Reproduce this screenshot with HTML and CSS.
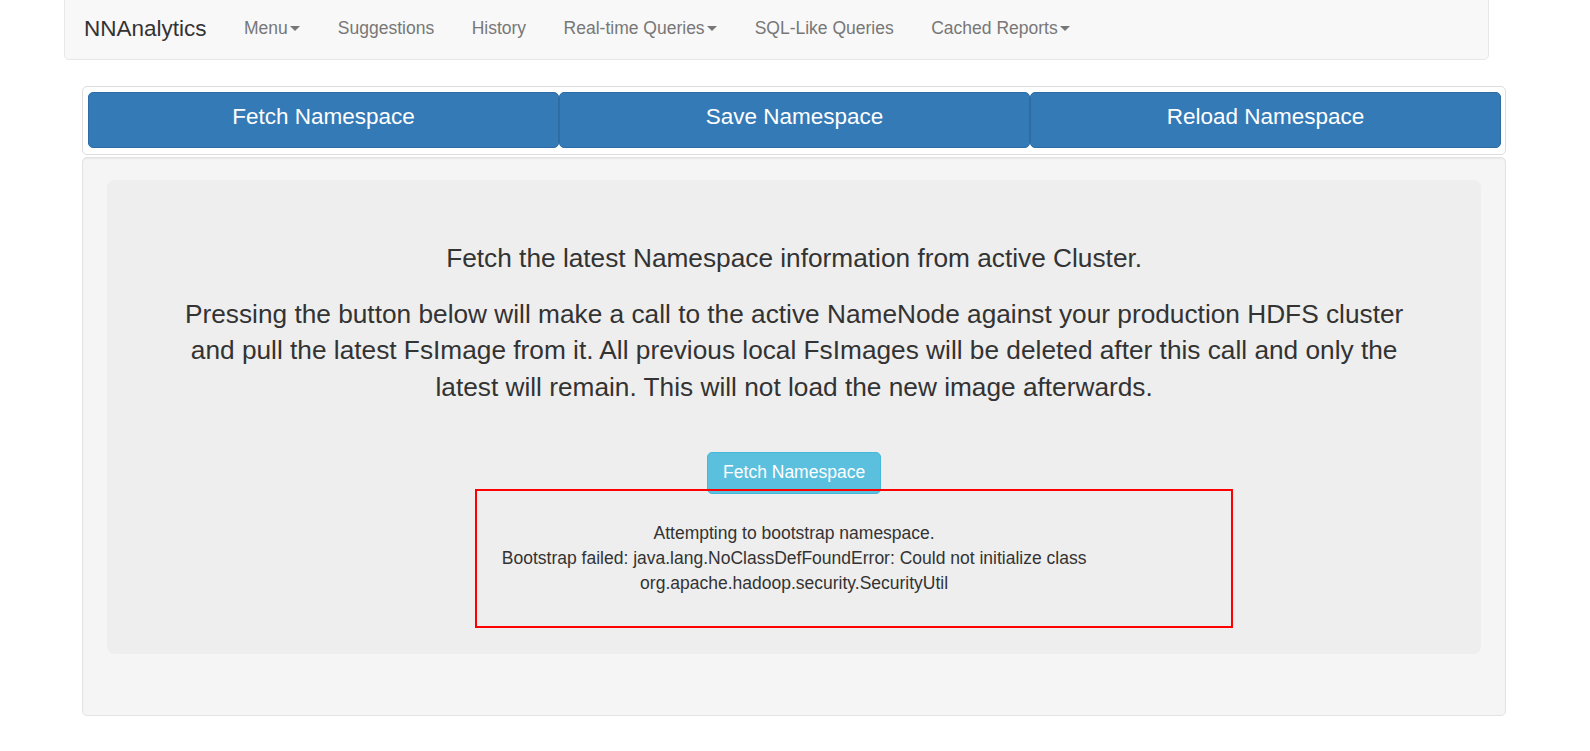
FILE: index.html
```html
<!DOCTYPE html>
<html>
<head>
<meta charset="utf-8">
<title>NNAnalytics</title>
<link rel="stylesheet" href="styles.css">
</head>
<body>
<nav class="navbar">
  <a class="brand">NNAnalytics</a>
  <ul class="nav">
    <li><a>Menu<span class="caret"></span></a></li>
    <li><a>Suggestions</a></li>
    <li><a>History</a></li>
    <li><a>Real-time Queries<span class="caret"></span></a></li>
    <li><a>SQL-Like Queries</a></li>
    <li><a>Cached Reports<span class="caret"></span></a></li>
  </ul>
</nav>
<main class="main">
  <div class="btn-panel">
    <button class="btn-lg">Fetch Namespace</button>
    <button class="btn-lg">Save Namespace</button>
    <button class="btn-lg">Reload Namespace</button>
  </div>
  <div class="well">
    <div class="jumbotron">
      <p>Fetch the latest Namespace information from active Cluster.</p>
      <p>Pressing the button below will make a call to the active NameNode against your production HDFS cluster and pull the latest FsImage from it. All previous local FsImages will be deleted after this call and only the latest will remain. This will not load the new image afterwards.</p>
      <div class="action"><button class="btn-info">Fetch Namespace</button></div>
      <div class="result">Attempting to bootstrap namespace.<br>Bootstrap failed: java.lang.NoClassDefFoundError: Could not initialize class org.apache.hadoop.security.SecurityUtil</div>
      <div class="highlight"></div>
    </div>
  </div>
</main>
</body>
</html>
```
FILE: styles.css
```css
* { box-sizing: border-box; }
html, body { margin: 0; padding: 0; background: #fff; }
body {
  font-family: "Liberation Sans", Arial, sans-serif;
  color: #333;
  font-size: 17.5px;
  line-height: 25px;
}
.navbar {
  margin: -4px 0 0 64px;
  width: 1425px;
  height: 64px;
  background: #f8f8f8;
  border: 1px solid #e7e7e7;
  border-radius: 5px;
  display: flex;
  align-items: center;
  padding-left: 19px;
}
.brand {
  font-size: 22.5px;
  line-height: 25px;
  color: #333;
  padding-right: 18.75px;
}
.nav {
  list-style: none;
  margin: 0;
  padding: 0;
  display: flex;
}
.nav a {
  display: block;
  padding: 0 18.75px;
  color: #777;
  font-size: 17.5px;
  line-height: 25px;
}
.caret {
  display: inline-block;
  width: 0;
  height: 0;
  margin-left: 2.5px;
  vertical-align: middle;
  border-top: 5px solid #777;
  border-left: 5px solid transparent;
  border-right: 5px solid transparent;
}
.main {
  margin-left: 82px;
  width: 1424px;
}
.btn-panel {
  margin-top: 26px;
  border: 1px solid #ddd;
  border-radius: 5px;
  background: #fff;
  padding: 5px 4px 6px 5px;
  display: flex;
}
.btn-lg {
  flex: 1;
  height: 56px;
  background: #337ab7;
  border: 1px solid #2e6da4;
  border-radius: 5px;
  color: #fff;
  font-family: "Liberation Sans", Arial, sans-serif;
  font-size: 22.5px;
  line-height: 30px;
  padding: 0 0 6px;
}
.well {
  margin-top: 2px;
  background: #f5f5f5;
  border: 1px solid #e3e3e3;
  border-radius: 5px;
  box-shadow: inset 0 1px 1px rgba(0,0,0,.05);
  padding: 22px 23.75px 23.75px 24px;
  height: 559px;
}
.jumbotron {
  position: relative;
  background: #eee;
  border-radius: 7.5px;
  padding: 60px 75px 58px;
  text-align: center;
  height: 474px;
}
.jumbotron p {
  margin: 0 0 18.75px;
  font-size: 26.25px;
  line-height: 36.75px;
}
.action { padding-top: 27px; }
.btn-info {
  height: 42px;
  padding: 0 15px;
  background: #5bc0de;
  border: 1px solid #46b8da;
  border-radius: 5px;
  color: #fff;
  font-family: "Liberation Sans", Arial, sans-serif;
  font-size: 17.5px;
  line-height: 25px;
}
.result {
  position: relative;
  margin: 27px auto 0;
  max-width: 720px;
  font-size: 17.5px;
  line-height: 25px;
}
.highlight {
  position: absolute;
  left: 368px;
  top: 309px;
  width: 758px;
  height: 139px;
  border: 2px solid #ff0000;
}
```
